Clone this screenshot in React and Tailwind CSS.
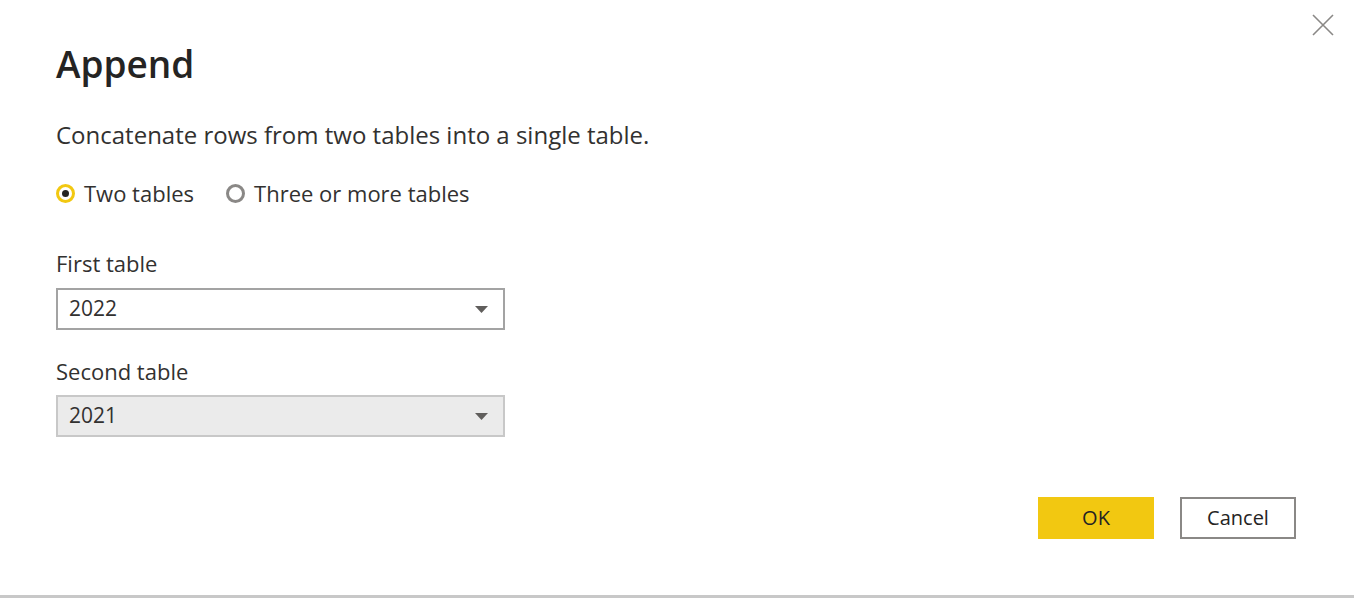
import React from "react";

const font = { fontFamily: '"Open Sans", "Noto Sans", sans-serif' };

function Radio({ checked, label }) {
  return (
    <label className="flex items-center gap-[9px]">
      {checked ? (
        <span className="w-[19px] h-[19px] rounded-full border-[3px] border-[#f2c811] bg-white flex items-center justify-center">
          <span className="w-[7px] h-[7px] rounded-full bg-[#252423]" />
        </span>
      ) : (
        <span className="w-[19px] h-[19px] rounded-full border-[3px] border-[#8a8886] bg-white" />
      )}
      <span className="text-[22px] text-[#323130] leading-none">{label}</span>
    </label>
  );
}

function Select({ value, disabled }) {
  return (
    <div
      className={
        "w-[449px] h-[42px] flex items-center justify-between pl-[11px] pr-[15px] border-2 " +
        (disabled ? "bg-[#ebebeb] border-[#c8c8c8]" : "bg-white border-[#a3a3a3]")
      }
    >
      <span className="text-[21px] text-[#323130]">{value}</span>
      <svg width="13" height="7" viewBox="0 0 13 7">
        <path d="M0 0 L13 0 L6.5 7 Z" fill="#605e5c" />
      </svg>
    </div>
  );
}

export default function App() {
  return (
    <div className="w-[1354px] h-[598px] bg-white flex flex-col" style={font}>
      <div className="flex-1 flex flex-col px-[56px] relative">
        <button className="absolute right-[20px] top-[14px] w-[22px] h-[22px]">
          <svg width="22" height="22" viewBox="0 0 22 22">
            <path d="M1 1 L21 21 M21 1 L1 21" stroke="#8a8886" strokeWidth="1.6" />
          </svg>
        </button>
        <h1 className="mt-[38px] text-[37px] font-semibold text-[#252423] leading-[52px]">Append</h1>
        <p className="mt-[30px] text-[24px] text-[#323130] leading-[30px]">
          Concatenate rows from two tables into a single table.
        </p>
        <div className="mt-[32px] flex items-center gap-[32px]">
          <Radio checked label="Two tables" />
          <Radio label="Three or more tables" />
        </div>
        <div className="mt-[44px] text-[22px] text-[#323130] leading-[30px]">First table</div>
        <div className="mt-[10px]">
          <Select value="2022" />
        </div>
        <div className="mt-[26px] text-[22px] text-[#323130] leading-[30px]">Second table</div>
        <div className="mt-[9px]">
          <Select value="2021" disabled />
        </div>
        <div className="mt-[60px] flex justify-end gap-[26px] pr-[2px]">
          <button className="w-[116px] h-[42px] bg-[#f2c811] text-[20px] text-[#252423]">OK</button>
          <button className="w-[116px] h-[42px] bg-white border-2 border-[#8a8886] text-[20px] text-[#252423]">
            Cancel
          </button>
        </div>
      </div>
      <div className="h-[3px] bg-[#c8c8c8]" />
    </div>
  );
}
